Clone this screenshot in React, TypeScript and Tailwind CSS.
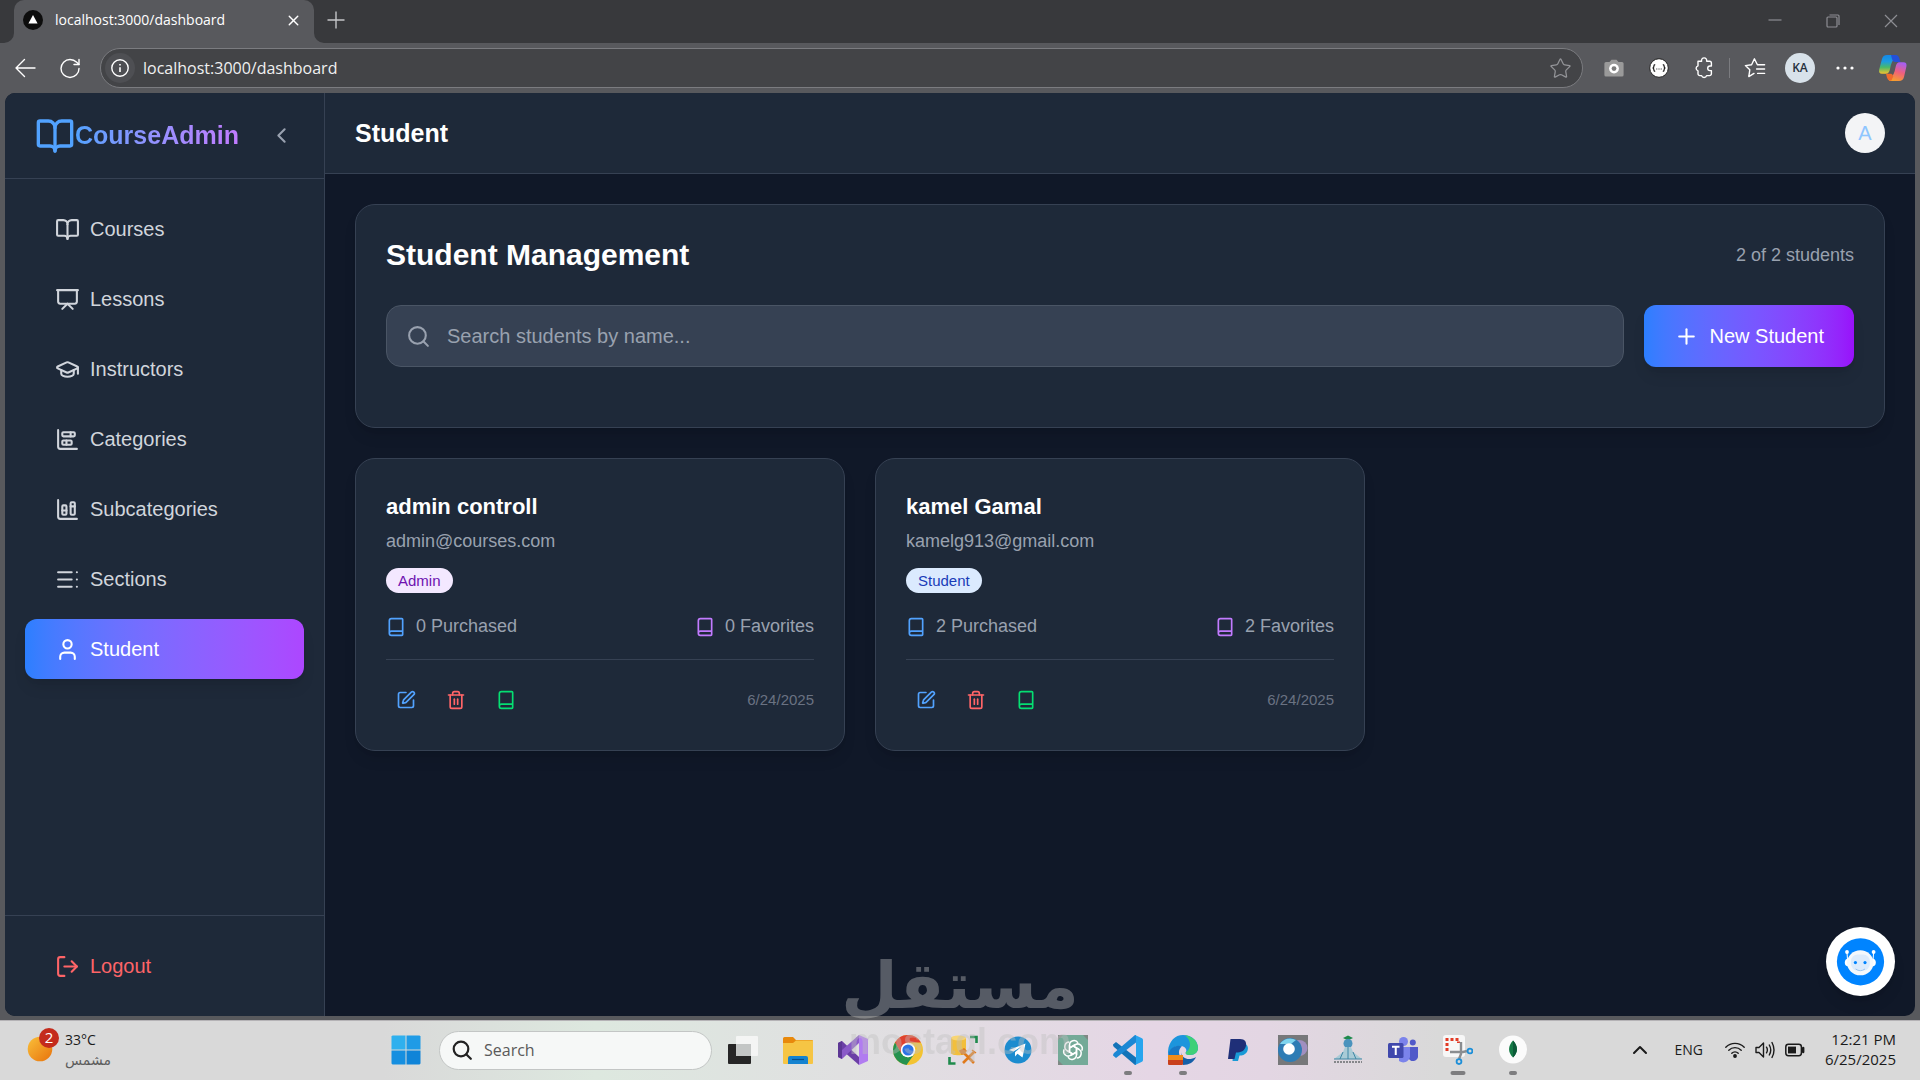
import { useState } from 'react'
import type { ReactNode } from 'react'
import {
  Book,
  BookOpen,
  ChartBarStacked,
  ChartColumnStacked,
  ChevronLeft,
  ChevronUp,
  GraduationCap,
  LogOut,
  Plus,
  Presentation,
  RotateCw,
  Search,
  SquarePen,
  Star,
  TableOfContents,
  Trash2,
  User,
  X,
} from 'lucide-react'
import clsx from 'clsx'

const navItems = [
  { label: 'Courses', icon: BookOpen },
  { label: 'Lessons', icon: Presentation },
  { label: 'Instructors', icon: GraduationCap },
  { label: 'Categories', icon: ChartBarStacked },
  { label: 'Subcategories', icon: ChartColumnStacked },
  { label: 'Sections', icon: TableOfContents },
  { label: 'Student', icon: User },
]

const students = [
  { name: 'admin controll', email: 'admin@courses.com', role: 'Admin', purchased: 0, favorites: 0, date: '6/24/2025' },
  { name: 'kamel Gamal', email: 'kamelg913@gmail.com', role: 'Student', purchased: 2, favorites: 2, date: '6/24/2025' },
]

type StudentInfo = (typeof students)[number]

/* ---------- Browser chrome ---------- */

function TabStrip() {
  return (
    <div className="flex h-[43px] items-stretch bg-[#38393c] pl-1">
      <svg className="h-[10px] w-[10px] self-end" viewBox="0 0 10 10" aria-hidden="true">
        <path d="M10 0V10H0A10 10 0 0 0 10 0Z" fill="#58595d" />
      </svg>
      <div className="flex w-[300px] items-center rounded-t-[10px] bg-[#58595d] pr-2.5 pb-[3px] pl-[9px] text-white">
        <svg className="h-5 w-5" viewBox="0 0 20 20" aria-hidden="true">
          <circle cx="10" cy="10" r="10" fill="#0d0d0d" />
          <path d="M10 5L14.6 13.4H5.4Z" fill="#fff" />
        </svg>
        <span className="ml-3 flex-1 text-[14px] leading-5">localhost:3000/dashboard</span>
        <button aria-label="Close tab" className="p-0.5">
          <X size={17} strokeWidth={2} />
        </button>
      </div>
      <svg className="h-[10px] w-[10px] self-end" viewBox="0 0 10 10" aria-hidden="true">
        <path d="M0 0V10H10A10 10 0 0 1 0 0Z" fill="#58595d" />
      </svg>
      <button aria-label="New tab" className="flex items-center pb-1 text-[#c4c5c8]">
        <svg width="24" height="24" viewBox="0 0 24 24" stroke="currentColor" strokeWidth="1.4">
          <path d="M12 3.5V20.5M3.5 12H20.5" />
        </svg>
      </button>
      <div className="ml-auto flex gap-[44px] pr-[22px] pb-px text-[#8d8e93]">
        <button aria-label="Minimize">
          <svg width="14" height="14" viewBox="0 0 14 14" stroke="currentColor" strokeWidth="1.2">
            <path d="M0.5 6H13.5" />
          </svg>
        </button>
        <button aria-label="Restore">
          <svg width="14" height="14" viewBox="0 0 14 14" fill="none" stroke="currentColor" strokeWidth="1.2">
            <rect x="1" y="3" width="10" height="10" rx="1" />
            <path d="M3.5 1H12A1 1 0 0 1 13 2V11" />
          </svg>
        </button>
        <button aria-label="Close">
          <svg width="14" height="14" viewBox="0 0 14 14" stroke="currentColor" strokeWidth="1.2">
            <path d="M1 1L13 13M13 1L1 13" />
          </svg>
        </button>
      </div>
    </div>
  )
}

function Toolbar() {
  return (
    <div className="flex h-[50px] items-center bg-[#58595d] pr-3 pl-[13px] text-white">
      <button aria-label="Back" className="flex w-6 justify-center">
        <svg width="22" height="20" viewBox="0 0 22 20" fill="none" stroke="currentColor" strokeWidth="1.4" strokeLinecap="round" strokeLinejoin="round">
          <path d="M21 10H2M10.5 1.5L2 10L10.5 18.5" />
        </svg>
      </button>
      <button aria-label="Refresh" className="ml-[21px] flex w-6 justify-center">
        <RotateCw size={25} strokeWidth={1.4} />
      </button>
      <div className="ml-[18px] flex h-10 flex-1 items-center rounded-full border border-[#7b7c80] bg-[#434447] pr-2.5 pl-1">
        <span className="flex h-[30px] w-[30px] items-center justify-center rounded-full bg-[#4e4f53]">
          <svg width="18" height="18" viewBox="0 0 18 18" fill="none" stroke="currentColor" strokeWidth="1.4" aria-hidden="true">
            <circle cx="9" cy="9" r="8.2" />
            <path d="M9 8.2V13M9 5V6.4" strokeWidth="1.6" />
          </svg>
        </span>
        <input
          aria-label="Address"
          defaultValue="localhost:3000/dashboard"
          className="ml-2 flex-1 bg-transparent text-[16px] leading-6 text-[#f0f0f0] outline-none"
        />
        <button aria-label="Add to favorites" className="text-[#939498]">
          <Star size={23} strokeWidth={1.3} />
        </button>
      </div>
      <div className="ml-4 flex items-center gap-[15px]">
        <button aria-label="Screenshot" className="flex w-[30px] justify-center">
          <svg width="20" height="19" viewBox="0 0 20 19">
            <path d="M2 3H5.5L7.5 0.8H12.5L14.5 3H18A1.6 1.6 0 0 1 19.6 4.6V16A1.6 1.6 0 0 1 18 17.6H2A1.6 1.6 0 0 1 0.4 16V4.6A1.6 1.6 0 0 1 2 3Z" fill="#9a9a9a" />
            <circle cx="10" cy="9.6" r="4.9" fill="#fff" />
            <circle cx="10" cy="9.6" r="2.4" fill="#7c7c7c" />
          </svg>
        </button>
        <button aria-label="JSON viewer" className="flex w-[30px] justify-center">
          <svg width="20" height="20" viewBox="0 0 20 20">
            <circle cx="10" cy="10" r="9.3" fill="#fff" stroke="#222" strokeWidth="1" />
            <path d="M6.2 6.6Q4.9 6.6 4.9 8Q4.9 10 3.6 10Q4.9 10 4.9 12Q4.9 13.4 6.2 13.4M13.8 6.6Q15.1 6.6 15.1 8Q15.1 10 16.4 10Q15.1 10 15.1 12Q15.1 13.4 13.8 13.4" fill="none" stroke="#222" strokeWidth="1.3" />
            <path d="M7.3 11H8.3M9.5 11H10.5M11.7 11H12.7" stroke="#222" strokeWidth="1" />
          </svg>
        </button>
        <div className="flex items-center gap-2.5">
          <button aria-label="Extensions" className="flex w-[30px] justify-center">
            <svg width="20" height="22" viewBox="0 0 20 22" fill="none" stroke="currentColor" strokeWidth="1.4" strokeLinejoin="round">
              <path d="M4 4.2H7.6A2.6 2.6 0 1 1 12.6 4.2H15.6A1.8 1.8 0 0 1 17.4 6V9H16A2.3 2.3 0 0 0 16 13.6H17.4V16.8A1.8 1.8 0 0 1 15.6 18.6H12.6A2.6 2.6 0 0 1 7.6 18.6H5.8A1.8 1.8 0 0 1 4 16.8V13.8A2.6 2.6 0 0 1 4 8.8Z" />
            </svg>
          </button>
          <span className="h-5 w-px bg-[#7b7c80]" />
          <button aria-label="Favorites" className="flex w-[30px] justify-center">
            <svg width="22" height="22" viewBox="0 0 22 22" fill="none" stroke="currentColor" strokeWidth="1.4" strokeLinecap="round" strokeLinejoin="round">
              <path d="M13.4 7.8L10.4 1.8L7.6 7.8L1.4 8.6L5.8 12.8L4.8 19.6L10 16.4M13.4 7.8H20.6M12.6 12H20.6M13.6 16.4H20.6" />
            </svg>
          </button>
        </div>
        <button aria-label="Profile" className="flex h-[30px] w-[30px] items-center justify-center rounded-full bg-[#d8e2ea] text-[12px] font-semibold text-[#26303c]">
          KA
        </button>
        <button aria-label="Settings" className="flex w-[30px] justify-center">
          <svg width="18" height="4" viewBox="0 0 18 4" fill="currentColor">
            <circle cx="2" cy="2" r="1.6" />
            <circle cx="9" cy="2" r="1.6" />
            <circle cx="16" cy="2" r="1.6" />
          </svg>
        </button>
        <button aria-label="Copilot" className="pl-[3px]">
          <svg width="30" height="28" viewBox="0 0 30 28">
            <defs>
              <linearGradient id="copilotA" x1="0" y1="0" x2="0" y2="1">
                <stop offset="0" stopColor="#1488e6" />
                <stop offset="0.35" stopColor="#1d9be0" />
                <stop offset="0.65" stopColor="#48b96a" />
                <stop offset="1" stopColor="#f4c22e" />
              </linearGradient>
              <linearGradient id="copilotB" x1="0.6" y1="0" x2="0.3" y2="1">
                <stop offset="0" stopColor="#a65ff0" />
                <stop offset="0.5" stopColor="#f0607c" />
                <stop offset="1" stopColor="#f7a02c" />
              </linearGradient>
            </defs>
            <path d="M9 1H18.5L14 8Q12.8 10.5 12 15Q11.2 19.8 8 19.8H4Q0.4 19.8 1.2 15.4L4 5Q5 1 9 1Z" fill="url(#copilotA)" />
            <path d="M13 1H18Q20.4 1 21 3.6L22.4 8H16.6Q14.8 8 14 5Z" fill="#2450d8" />
            <path d="M21 27H11L15.6 20Q16.8 17.6 17.6 13Q18.4 8.2 21.6 8.2H25.4Q29.2 8.2 28.4 12.6L26 23Q25 27 21 27Z" fill="url(#copilotB)" />
            <path d="M8 19.8H13.2Q14.6 20 15.2 22.6L13.4 26.6Q10 27.4 9 23.8Z" fill="#ef6a2c" />
          </svg>
        </button>
      </div>
    </div>
  )
}

/* ---------- Dashboard ---------- */

function Sidebar({ active, onSelect }: { active: string; onSelect: (label: string) => void }) {
  return (
    <aside className="flex w-80 shrink-0 flex-col border-r border-gray-700 bg-gray-800">
      <div className="flex h-[86px] items-center border-b border-gray-700 px-[30px]">
        <BookOpen size={40} className="text-blue-400" />
        <span className="bg-linear-to-r from-blue-400 to-purple-400 bg-clip-text text-[25px] leading-[35px] font-bold text-transparent">
          CourseAdmin
        </span>
        <button aria-label="Collapse sidebar" className="ml-auto text-gray-400">
          <ChevronLeft size={25} />
        </button>
      </div>
      <nav className="flex flex-1 flex-col gap-2.5 p-5">
        {navItems.map(({ label, icon: Icon }) => (
          <button
            key={label}
            onClick={() => onSelect(label)}
            className={clsx(
              'flex h-15 items-center gap-2.5 rounded-xl px-[30px] text-[20px] leading-[30px] transition-colors duration-150',
              active === label
                ? 'bg-linear-to-r from-blue-500 to-purple-500 text-white shadow-lg'
                : 'text-gray-300 hover:bg-gray-700'
            )}
          >
            <Icon size={25} />
            {label}
          </button>
        ))}
      </nav>
      <div className="border-t border-gray-700 p-5">
        <button className="flex h-15 w-full items-center gap-2.5 rounded-xl px-[30px] text-[20px] leading-[30px] text-red-400">
          <LogOut size={25} />
          Logout
        </button>
      </div>
    </aside>
  )
}

function StudentCard({ student }: { student: StudentInfo }) {
  return (
    <article className="rounded-[20px] border border-gray-700 bg-gray-800 p-[30px] shadow-lg">
      <h3 className="text-[22px] leading-[35px] font-bold text-white">{student.name}</h3>
      <p className="mt-[5px] text-[18px] leading-[25px] text-gray-400">{student.email}</p>
      <span
        className={clsx(
          'mt-3.5 flex h-[25px] w-fit items-center rounded-full px-3 text-[15px] leading-5',
          student.role === 'Admin' ? 'bg-purple-100 text-purple-800' : 'bg-blue-100 text-blue-800'
        )}
      >
        {student.role}
      </span>
      <div className="mt-[21px] flex justify-between text-[18px] leading-[25px] text-gray-400">
        <span className="flex items-center gap-2.5">
          <Book size={20} className="text-blue-400" />
          {student.purchased} Purchased
        </span>
        <span className="flex items-center gap-2.5">
          <Book size={20} className="text-purple-400" />
          {student.favorites} Favorites
        </span>
      </div>
      <div className="mt-5 flex items-center justify-between border-t border-gray-700 pt-5">
        <div className="flex gap-2.5">
          <button aria-label="Edit student" className="p-2.5 text-blue-400">
            <SquarePen size={20} />
          </button>
          <button aria-label="Delete student" className="p-2.5 text-red-400">
            <Trash2 size={20} />
          </button>
          <button aria-label="Student courses" className="p-2.5 text-green-400">
            <Book size={20} />
          </button>
        </div>
        <span className="text-[15px] leading-5 text-gray-500">{student.date}</span>
      </div>
    </article>
  )
}

function ChatButton() {
  return (
    <button aria-label="Open chat" className="absolute right-5 bottom-5 h-[69px] w-[69px] rounded-full bg-white shadow-lg">
      <svg viewBox="0 0 69 69" aria-hidden="true">
        <circle cx="34.5" cy="34.8" r="23.6" fill="#0084ff" />
        <path d="M21 25.5L21.6 34M47.6 25.5L47 34" stroke="#fff" strokeWidth="1" />
        <circle cx="21" cy="25" r="1.9" fill="#fff" />
        <circle cx="47.6" cy="25" r="1.9" fill="#fff" />
        <ellipse cx="22" cy="35.6" rx="3.2" ry="3.8" fill="#fff" />
        <ellipse cx="46.6" cy="35.6" rx="3.2" ry="3.8" fill="#fff" />
        <ellipse cx="34.3" cy="35.8" rx="13.2" ry="12.5" fill="#f4f8fc" />
        <rect x="25" y="27.6" width="18.8" height="16" rx="6.5" fill="#dcebfc" />
        <circle cx="29.4" cy="35.6" r="1.6" fill="#0084ff" />
        <circle cx="39" cy="35.6" r="1.6" fill="#0084ff" />
        <path d="M29.6 42Q34.2 45.4 39 42" fill="none" stroke="#9cc4ee" strokeWidth="1" />
      </svg>
    </button>
  )
}

function Dashboard() {
  const [active, setActive] = useState('Student')
  const [query, setQuery] = useState('')
  const shown = students.filter((s) => s.name.toLowerCase().includes(query.toLowerCase()))

  return (
    <div className="relative mx-[5px] mb-1 flex min-h-0 flex-1 overflow-hidden rounded-[10px] bg-gray-900 font-['Liberation_Sans',Arial,sans-serif]">
      <Sidebar active={active} onSelect={setActive} />
      <div className="flex min-w-0 flex-1 flex-col">
        <header className="flex h-[81px] shrink-0 items-center justify-between border-b border-gray-700 bg-gray-800 px-[30px]">
          <h1 className="text-[25px] leading-[35px] font-bold text-white">{active}</h1>
          <button aria-label="Account" className="h-10 w-10 rounded-full bg-gray-100 text-[20px] text-blue-300">
            A
          </button>
        </header>
        <main className="flex flex-1 flex-col gap-[30px] overflow-hidden p-[30px]">
          <section className="rounded-[20px] border border-gray-700 bg-gray-800 px-[30px] pt-[30px] pb-15 shadow-lg">
            <div className="flex items-center justify-between">
              <h2 className="text-[30px] leading-10 font-bold text-white">Student Management</h2>
              <span className="text-[18px] leading-[25px] text-gray-400">
                {shown.length} of {students.length} students
              </span>
            </div>
            <div className="mt-[30px] flex h-[62px] gap-5">
              <label className="flex flex-1 items-center gap-4 rounded-[15px] border border-gray-600 bg-gray-700 px-[19px]">
                <Search size={25} className="text-gray-400" />
                <input
                  type="text"
                  aria-label="Search students"
                  value={query}
                  onChange={(e) => setQuery(e.target.value)}
                  placeholder="Search students by name..."
                  className="flex-1 bg-transparent text-[20px] leading-[30px] text-white outline-none placeholder:text-gray-400"
                />
              </label>
              <button className="flex items-center gap-2.5 rounded-xl bg-linear-to-r from-blue-500 to-purple-600 px-[30px] text-[20px] leading-[30px] text-white shadow-lg">
                <Plus size={25} />
                New Student
              </button>
            </div>
          </section>
          <div className="grid grid-cols-3 gap-[30px]">
            {shown.map((student) => (
              <StudentCard key={student.email} student={student} />
            ))}
          </div>
        </main>
      </div>
      <ChatButton />
    </div>
  )
}

/* ---------- Taskbar ---------- */

const apps: { name: string; running?: 'idle' | 'focused'; art: ReactNode }[] = [
  {
    name: 'Task view',
    art: (
      <>
        <rect x="0" y="9" width="23" height="20" rx="1" fill="#262626" />
        <rect x="8" y="1" width="22" height="20" rx="1" fill="#f6f6f6" fillOpacity="0.9" />
        <rect x="8" y="9" width="15" height="12" fill="#c3c6c5" />
      </>
    ),
  },
  {
    name: 'File Explorer',
    art: (
      <>
        <path d="M0 3.5A1.5 1.5 0 0 1 1.5 2H10L13 5H29A1 1 0 0 1 30 6V10H0Z" fill="#e8890c" />
        <path d="M0 8H10L13 5.5H30V28A1 1 0 0 1 29 29H1A1 1 0 0 1 0 28Z" fill="#f6c544" />
        <path d="M5 29V23A2 2 0 0 1 7 21H23A2 2 0 0 1 25 23V29Z" fill="#1583d0" />
        <path d="M9 24.5H21" stroke="#0a4f8a" strokeWidth="1.2" />
      </>
    ),
  },
  {
    name: 'Visual Studio',
    art: (
      <>
        <path d="M0 8L4 6L21 22V30L0 11.5Z" fill="#6b3fa6" />
        <path d="M0 22L4 24L21 8V0L0 18.5Z" fill="#8a5ac8" />
        <path d="M0 8L4 6V24L0 22Z" fill="#5c3794" />
        <path d="M21 0L30 4V26L21 30Z" fill="#b17cf0" />
      </>
    ),
  },
  {
    name: 'Google Chrome',
    art: (
      <>
        <circle cx="15" cy="15" r="15" fill="#f3c332" />
        <path d="M8.5 18.8L2 7.5A15 15 0 0 1 28 7.5H15Z" fill="#e0412f" />
        <path d="M2 7.5L8.5 18.8L15 22.5L21.5 18.8L13.5 29.9A15 15 0 0 1 2 7.5Z" fill="#25924f" />
        <circle cx="15" cy="15" r="7.3" fill="#fff" />
        <circle cx="15" cy="15" r="5.6" fill="#2b72e6" />
      </>
    ),
  },
  {
    name: 'SQL Server Management Studio',
    art: (
      <>
        <path d="M3 3V18C3 21 18 21 18 18V3Z" fill="#f2bf3c" />
        <ellipse cx="10.5" cy="3" rx="7.5" ry="2.5" fill="#f8d573" />
        <path d="M22 2H28.5V8M1.5 22V28.5H7.5" fill="none" stroke="#1f8a4c" strokeWidth="2.6" />
        <path d="M14 16L26 28M26 17L15 28" stroke="#e07a1c" strokeWidth="2.6" />
        <path d="M12 16L16 14L18 16L14 19ZM24 15L28 18" fill="#e07a1c" stroke="#e07a1c" strokeWidth="1.5" />
      </>
    ),
  },
  {
    name: 'Telegram',
    art: (
      <>
        <circle cx="15" cy="15" r="13.5" fill="#1c8ccf" />
        <path d="M6 15L22.5 8.5L19.5 22.5L14.5 18.8L12 21.5V17.3L18.5 11.5L10.5 16.5Z" fill="#fff" />
      </>
    ),
  },
  {
    name: 'ChatGPT',
    art: (
      <>
        <rect width="30" height="30" fill="#74aa98" />
        <path d="M0 0H5L0 5ZM30 0H25L30 5ZM0 30V25L5 30Z" fill="#7e8984" />
        <g fill="none" stroke="#fff" strokeWidth="1.5">
          {[0, 60, 120, 180, 240, 300].map((angle) => (
            <path key={angle} d="M11.5 17V10.2A4.6 4.6 0 0 1 20 7.8M11.5 13L17.5 9.5" transform={`rotate(${angle} 15 15)`} />
          ))}
        </g>
      </>
    ),
  },
  {
    name: 'Visual Studio Code',
    running: 'idle',
    art: (
      <>
        <path d="M0 9.5L3 7L23 22.5V30H22L1 12Q0 11 0 9.5Z" fill="#1273b8" />
        <path d="M0 20.5L3 23L23 7.5V0H22L1 18Q0 19 0 20.5Z" fill="#1b88d4" />
        <path d="M22 0L29 3.3Q30 4 30 5V25Q30 26 29 26.7L22 30Q23 29 23 27V3Q23 1 22 0Z" fill="#27a5ee" />
      </>
    ),
  },
  {
    name: 'Microsoft Edge',
    running: 'idle',
    art: (
      <>
        <path d="M0 21C-1 8 6 0 15 0C24 0 30 6 30 13C30 17 27 20 22 20C18 20 17 18.5 18 17C19.5 13.5 16 10.5 11 11C5 11.5 1 16 0 21Z" fill="#1c95dc" />
        <path d="M17 0.2C25 1 30 6.5 30 13C30 17 27 20 22 20C18 20 17 18.5 18 17C24 13 23 5 17 0.2Z" fill="#3ed078" />
        <path d="M0 21C1 12 9 9 14 11.5C10 14 10 20 14 24L12 29C4 28 0 25 0 21Z" fill="#1878c4" />
        <path d="M13 17C14 24 21 26 28 22C26 27 21 30 15 30Z" fill="#155fa8" />
        <rect x="0" y="20" width="15" height="10" rx="1" fill="#c9401c" />
        <rect x="0" y="20" width="15" height="5" fill="#f08c1a" />
      </>
    ),
  },
  {
    name: 'PayPal',
    art: (
      <>
        <path d="M11 8H20C25 9 26 13 24 17C22 20 19 20.5 16.5 20.5L15 26H9.5Z" fill="#199ad6" />
        <path d="M7.5 4H17C22 4 24 7 22.8 11.5C21.5 16 18 17.5 13 17.5L11.5 24H5Z" fill="#1f2f78" />
      </>
    ),
  },
  {
    name: 'Camera',
    art: (
      <>
        <rect width="30" height="30" fill="#77787a" />
        <ellipse cx="21" cy="13" rx="8.5" ry="8" fill="#a08fc0" />
        <circle cx="12" cy="15" r="12" fill="#2e7cb4" />
        <path d="M2 9A12 12 0 0 1 18 5L13 9Z" fill="#7fd4ee" />
        <circle cx="11" cy="14" r="5.8" fill="#fff" />
      </>
    ),
  },
  {
    name: 'University portal',
    art: (
      <>
        <path d="M10 3L15 0.5L20 3L15 5.5Z" fill="#1f8a4c" />
        <circle cx="15" cy="8.5" r="4.5" fill="#4a93bd" />
        <path d="M12 12H18L20 17L29 24H1L10 17Z" fill="#a9cbd6" />
        <path d="M15 12V24M10 17L7 24M20 17L23 24M1 24H29" stroke="#3f86a5" strokeWidth="1" />
        <path d="M1 27H29" stroke="#85878a" strokeWidth="2" strokeDasharray="2 1" />
      </>
    ),
  },
  {
    name: 'Microsoft Teams',
    art: (
      <>
        <circle cx="15.5" cy="6.5" r="4.5" fill="#7b83eb" />
        <circle cx="24.8" cy="7.5" r="3" fill="#5059c9" />
        <path d="M20 12H30V20A5 5 0 0 1 20 22Z" fill="#5059c9" />
        <path d="M11 12H22V22A7 7 0 0 1 11 26Z" fill="#7b83eb" />
        <rect x="0" y="8" width="15.5" height="15" rx="1.5" fill="#4048ac" />
        <path d="M4 11.8H11.5M7.75 12V20" stroke="#fff" strokeWidth="2" />
      </>
    ),
  },
  {
    name: 'Snipping Tool',
    running: 'focused',
    art: (
      <>
        <rect x="0" y="0" width="22" height="22" rx="3" fill="#f7f7f7" />
        <path d="M4 16V4.5H15.5V8" fill="none" stroke="#e23b26" strokeWidth="3" strokeDasharray="3 2" />
        <path d="M18 7V19L16 24M7 17H20L24 16" fill="none" stroke="#8a8d90" strokeWidth="2.4" />
        <circle cx="27" cy="16" r="2.4" fill="none" stroke="#1d8fd8" strokeWidth="1.8" />
        <circle cx="16" cy="26.6" r="2.4" fill="none" stroke="#1d8fd8" strokeWidth="1.8" />
      </>
    ),
  },
  {
    name: 'MongoDB Compass',
    running: 'idle',
    art: (
      <>
        <circle cx="15" cy="14.5" r="14" fill="#fbfbfb" />
        <path d="M15 5.5C20 11 20.5 17 15 22.5C9.5 17 10 11 15 5.5Z" fill="#147a45" />
        <path d="M15 5.5C20 11 20.5 17 15 22.5Z" fill="#0c5a38" />
      </>
    ),
  },
]

function Taskbar() {
  return (
    <footer className="grid h-15 grid-cols-[1fr_auto_1fr] border-t border-[#b5b3b6] bg-[linear-gradient(90deg,#d9d9d9_20%,#dde8df_31%,#e0e0e1_44%,#e5d6e5_60%,#e3d6e3_66%,#d9d9d9_75%)] pr-px pb-px text-[#1b1b1b]">
      <div className="flex items-start gap-1.5 pt-[7px] pl-[27px]">
        <svg width="32" height="36" viewBox="0 0 32 36" aria-hidden="true">
          <defs>
            <linearGradient id="sun" x1="0" y1="0" x2="1" y2="1">
              <stop offset="0" stopColor="#f9c03a" />
              <stop offset="1" stopColor="#e8720c" />
            </linearGradient>
          </defs>
          <circle cx="13" cy="21" r="12.3" fill="url(#sun)" />
          <circle cx="22" cy="10" r="10" fill="#c42b1c" />
          <text x="22" y="15.4" textAnchor="middle" fontSize="15" fill="#fff">
            2
          </text>
        </svg>
        <div className="pt-0.5 text-[14px] leading-5">
          <div>33°C</div>
          <div dir="rtl" className="font-['DejaVu_Sans',sans-serif] text-[#5d5d5d]">
            مشمس
          </div>
        </div>
      </div>
      <div className="flex items-center">
        <button aria-label="Start" className="mr-[18px]">
          <svg width="30" height="30" viewBox="0 0 30 30">
            <path d="M1.5 0.5H14.5V14.5H0.5V1.5Z" fill="#2fb0ee" />
            <path d="M15.5 0.5H28.5L29.5 1.5V14.5H15.5Z" fill="#1f9be6" />
            <path d="M0.5 15.5H14.5V29.5H1.5L0.5 28.5Z" fill="#168fe0" />
            <path d="M15.5 15.5H29.5V28.5L28.5 29.5H15.5Z" fill="#0f84d8" />
          </svg>
        </button>
        <label className="flex h-[39px] w-[273px] items-center gap-3 rounded-full border border-[#c3c6c5] bg-[#f6f8f7] pl-3">
          <svg width="20" height="20" viewBox="0 0 20 20" fill="none" stroke="#222" strokeWidth="2.2" strokeLinecap="round" aria-hidden="true">
            <circle cx="9" cy="9" r="7.3" />
            <path d="M14.2 14.2L18.8 18.8" />
          </svg>
          <input
            aria-label="Search the web and apps"
            placeholder="Search"
            className="w-40 bg-transparent text-[16px] leading-6 outline-none placeholder:text-[#5a5a5a]"
          />
        </label>
        <div className="ml-4 flex h-full items-center gap-[25px]">
          {apps.map((app) => (
            <button key={app.name} aria-label={app.name} className="relative flex h-full items-center">
              <svg width="30" height="30" viewBox="0 0 30 30">
                {app.art}
              </svg>
              {app.running && (
                <span
                  className={clsx(
                    'absolute bottom-1 left-1/2 h-1 -translate-x-1/2 rounded-full bg-[#7d7d7f]',
                    app.running === 'focused' ? 'w-[15px]' : 'w-2'
                  )}
                />
              )}
            </button>
          ))}
        </div>
      </div>
      <div className="flex items-center justify-end pr-[23px]">
        <button aria-label="Show hidden icons">
          <ChevronUp size={24} strokeWidth={2} />
        </button>
        <button className="ml-[22px] text-[14px] leading-5">ENG</button>
        <button aria-label="Network, sound and battery" className="ml-[22px] flex items-center gap-2.5">
          <svg width="20" height="18" viewBox="0 0 20 18" fill="none" stroke="currentColor" strokeWidth="1.4" strokeLinecap="round">
            <path d="M0.8 6.2A13 13 0 0 1 19.2 6.2M3.8 9.2A8.8 8.8 0 0 1 16.2 9.2M6.8 12.2A4.5 4.5 0 0 1 13.2 12.2" />
            <circle cx="10" cy="15" r="1.2" fill="currentColor" />
          </svg>
          <svg width="20" height="18" viewBox="0 0 20 18" fill="none" stroke="currentColor" strokeWidth="1.4" strokeLinecap="round" strokeLinejoin="round">
            <path d="M1 6.5H4L8.5 2V16L4 11.5H1ZM11.5 6.2Q13.3 9 11.5 11.8M14.3 4Q17.2 9 14.3 14M17 1.5Q21 9 17 16.5" />
          </svg>
          <svg width="20" height="14" viewBox="0 0 20 14" fill="none" stroke="currentColor" strokeWidth="1.5">
            <rect x="0.8" y="1.3" width="15.6" height="11.4" rx="2.6" />
            <rect x="3" y="3.6" width="8" height="6.8" fill="currentColor" stroke="none" />
            <path d="M18.2 5V9" strokeWidth="2.4" strokeLinecap="round" />
          </svg>
        </button>
        <div className="ml-5 pb-[3px] text-right text-[15px] leading-5">
          <div>12:21 PM</div>
          <div>6/25/2025</div>
        </div>
      </div>
    </footer>
  )
}

function Watermark() {
  return (
    <div className="pointer-events-none absolute bottom-0 left-1/2 flex -translate-x-1/2 flex-col items-center pb-[18px] font-bold text-[#c0c0c0] opacity-40">
      <span dir="rtl" className="font-['DejaVu_Sans',sans-serif] text-[65px] leading-[72px]">
        مستقل
      </span>
      <span className="font-['Liberation_Sans',Arial,sans-serif] text-[36px] leading-10">mostaql.com</span>
    </div>
  )
}

export default function App() {
  return (
    <div className="relative flex h-screen flex-col overflow-hidden bg-[#58595d] font-['Open_Sans','Noto_Sans',sans-serif]">
      <TabStrip />
      <Toolbar />
      <Dashboard />
      <Taskbar />
      <Watermark />
    </div>
  )
}
